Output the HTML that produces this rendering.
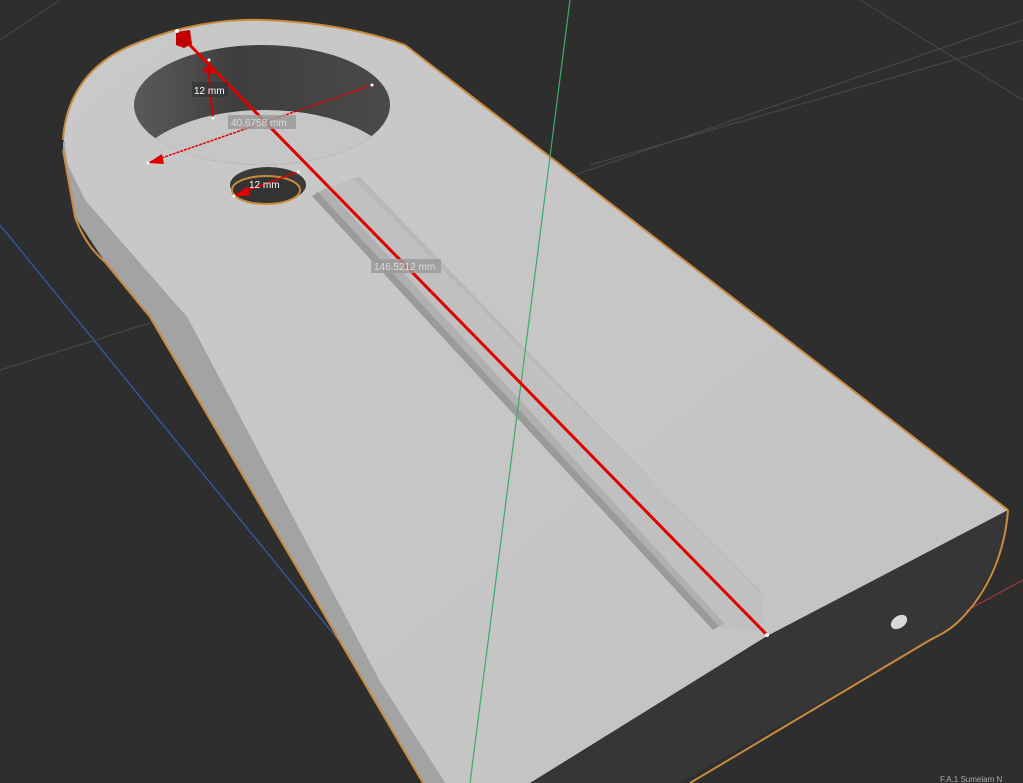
<!DOCTYPE html>
<html><head><meta charset="utf-8"><style>
html,body{margin:0;padding:0;background:#2e2e2e;overflow:hidden}
svg{display:block}
text{font-family:"Liberation Sans",sans-serif}
</style></head><body>
<svg width="1023" height="783" viewBox="0 0 1023 783" xmlns="http://www.w3.org/2000/svg">
<defs>
<linearGradient id="hole" x1="0" y1="0" x2="1" y2="0">
<stop offset="0" stop-color="#5a5a5a"/><stop offset="0.4" stop-color="#3e3e3e"/><stop offset="1" stop-color="#4a4a4a"/>
</linearGradient>
<linearGradient id="face" x1="0" y1="0" x2="1" y2="1">
<stop offset="0" stop-color="#c9c9c9"/><stop offset="1" stop-color="#c3c3c3"/>
</linearGradient>
<clipPath id="hc"><ellipse cx="262" cy="105" rx="128" ry="60"/></clipPath>
</defs>
<rect width="1023" height="783" fill="#2e2e2e"/>
<g stroke="#4a4a4a" stroke-width="1" fill="none">
<line x1="0" y1="370" x2="150" y2="323"/>
<line x1="560" y1="180" x2="1023" y2="20"/>
<line x1="590" y1="165" x2="1023" y2="40"/>
<line x1="860" y1="0" x2="1023" y2="100"/>
<line x1="0" y1="40" x2="60" y2="0"/>
</g>
<line x1="0" y1="225" x2="455" y2="783" stroke="#2f5ea8" stroke-width="1.2"/>
<line x1="940" y1="625" x2="1023" y2="580" stroke="#a83a3a" stroke-width="1"/>
<path d="M1008,510 L1007,520 C1000,560 980,600 950,628 L680,783 L530,783 L767,636 Z" fill="#363636"/>
<path d="M1008,510 C1005,550 990,590 960,620 C950,630 940,635 930,640 L690,783" stroke="#c98a3e" stroke-width="2" fill="none"/>
<ellipse cx="899" cy="622" rx="9" ry="6" transform="rotate(-35 899 622)" fill="#d8d8d8"/>
<path d="M63,140 L63,150 L75,217 L105,262 L150,317 L423,783 L445,783 L380,682 L187,317 L80,190 Z" fill="#a3a3a3"/>
<path d="M63,150 L75,217 Q85,245 105,262 L150,317 L423,783" stroke="#c98a3e" stroke-width="2" fill="none"/>
<path d="M63,135 C66,95 90,60 140,42 C175,28 220,18 265,20 C320,22 370,32 405,45 L1008,510 L767,636 L530,783 L445,783 L380,682 L187,317 L85,200 L68,165 Z" fill="url(#face)"/>
<path d="M63,140 C66,95 90,60 140,42 C175,28 220,18 265,20 C320,22 370,32 405,45 L1008,510" stroke="#c98a3e" stroke-width="2" fill="none"/>
<path d="M312,196 L352,178 L760,590 L765,632 L718,628 Z" fill="#c0c0c0"/>
<path d="M312,196 L318,192 L719,626 L713,630 Z" fill="#9a9a9a"/>
<path d="M318,192 L326,188 L725,624 L719,626 Z" fill="#b0b0b0"/>
<path d="M352,178 L360,177 L765,598 L760,590 Z" fill="#b8b8b8"/>
<ellipse cx="262" cy="105" rx="128" ry="60" fill="url(#hole)"/>
<ellipse cx="265" cy="178" rx="135" ry="68" fill="#c6c6c6" clip-path="url(#hc)"/>
<ellipse cx="268" cy="185" rx="38" ry="18" fill="#3a3a3a"/>
<ellipse cx="266" cy="190" rx="34" ry="14" fill="#333" stroke="#c98a3e" stroke-width="2"/>
<line x1="570" y1="0" x2="470" y2="783" stroke="#3daa6a" stroke-width="1.2"/>
<line x1="183" y1="38" x2="767" y2="635" stroke="#e00000" stroke-width="3"/>
<path d="M176,32 L190,30 L192,44 L184,48 L176,45 Z" fill="#c00000"/>
<circle cx="177" cy="31" r="2" fill="#fff"/>
<circle cx="767" cy="635" r="2" fill="#fff"/>
<line x1="208" y1="70" x2="213" y2="118" stroke="#d00000" stroke-width="2"/>
<path d="M202,72 L210,62 L216,74 Z" fill="#d00000"/>
<circle cx="209" cy="60" r="1.5" fill="#fff"/><circle cx="213" cy="118" r="1.5" fill="#fff"/>
<line x1="150" y1="162" x2="372" y2="85" stroke="#e00000" stroke-width="1.5" stroke-dasharray="3,1"/>
<path d="M148,163 L162,154 L164,164 Z" fill="#e00000"/>
<circle cx="148" cy="163" r="1.5" fill="#fff"/><circle cx="372" cy="85" r="1.5" fill="#fff"/>
<line x1="235" y1="195" x2="298" y2="172" stroke="#e00000" stroke-width="1.5"/>
<path d="M234,196 L248,186 L250,196 Z" fill="#e00000"/>
<circle cx="234" cy="196" r="1.5" fill="#fff"/><circle cx="298" cy="172" r="1.5" fill="#fff"/>
<rect x="192" y="82" width="36" height="15" fill="#333" opacity="0.7"/>
<text x="194" y="94" font-size="10" fill="#fff">12 mm</text>
<rect x="228" y="115" width="68" height="14" fill="#9a9a9a" opacity="0.85"/>
<text x="231" y="126" font-size="10" fill="#ddd">40.6758 mm</text>
<text x="249" y="188" font-size="10" fill="#fff">12 mm</text>
<rect x="371" y="259" width="70" height="14" fill="#9a9a9a" opacity="0.85"/>
<text x="374" y="270" font-size="10" fill="#ddd">146.5212 mm</text>
<text x="940" y="782" font-size="8" fill="#aaa">F.A.1 Sumelam N</text>
</svg>
</body></html>
